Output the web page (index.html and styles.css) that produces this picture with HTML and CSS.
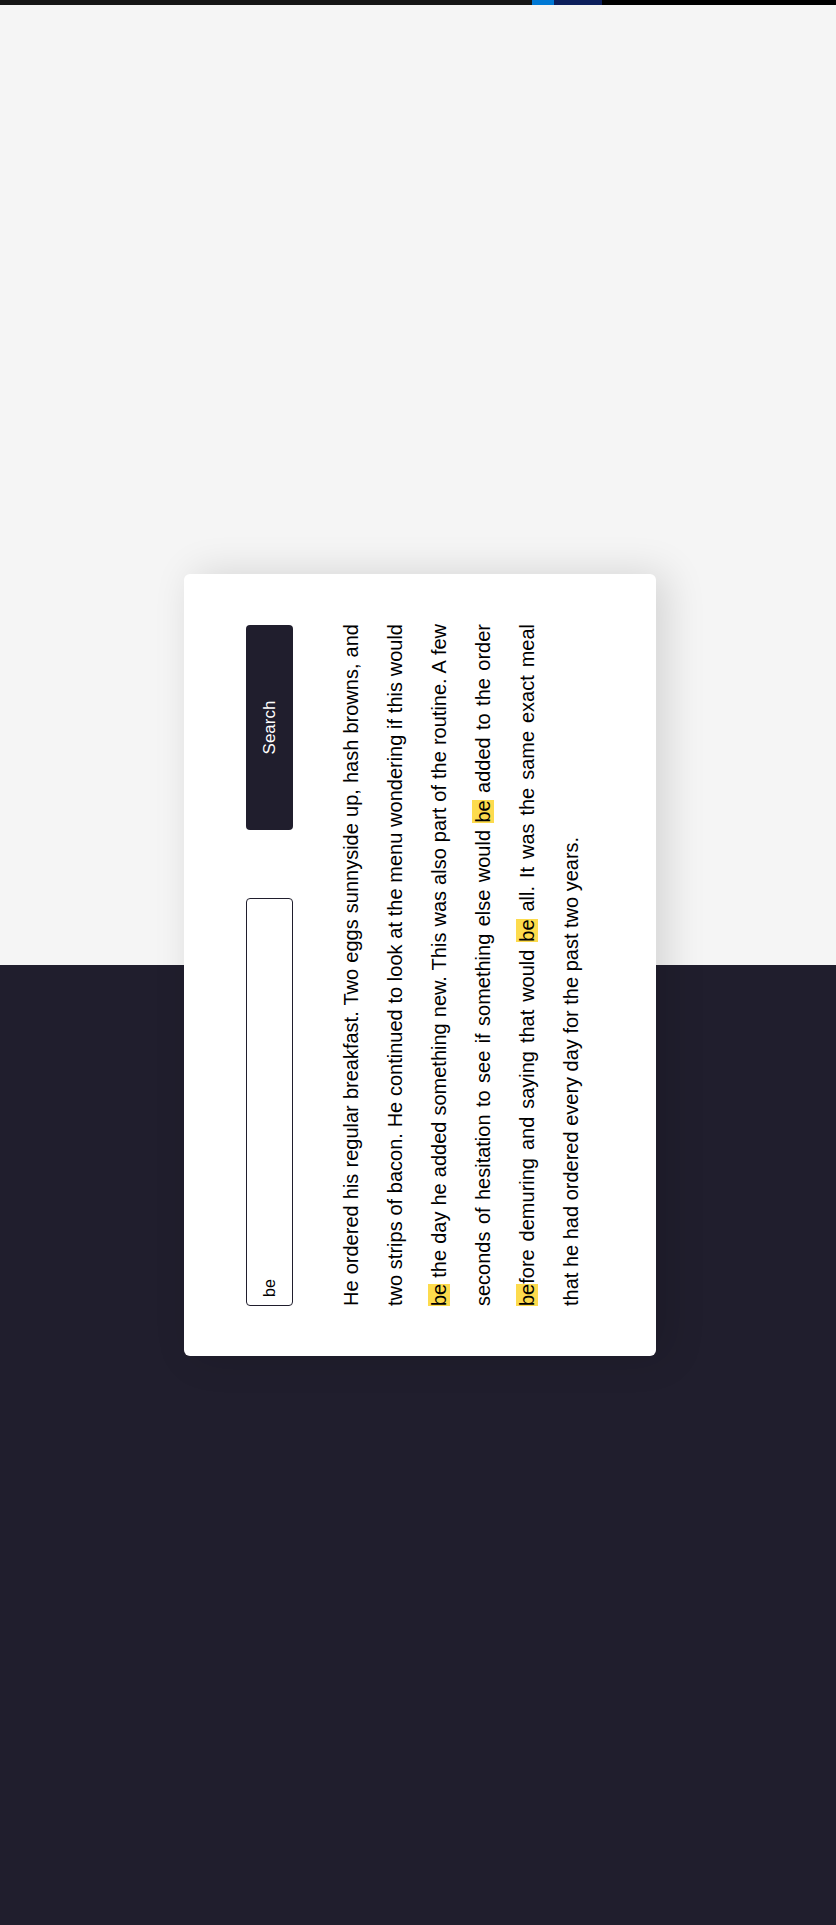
FILE: index.html
```html
<!DOCTYPE html>
<html lang="en">
<head>
<meta charset="utf-8">
<title>Search highlight</title>
<link rel="stylesheet" href="styles.css">
</head>
<body>
<div class="topbar">
  <div class="seg seg-dark"></div>
  <div class="seg seg-blue"></div>
  <div class="seg seg-navy"></div>
  <div class="seg seg-black"></div>
</div>
<main class="stage">
  <div class="card">
    <form class="search">
      <input class="search-input" type="text" value="be">
      <button class="search-btn" type="button">Search</button>
    </form>
    <p class="text">He ordered his regular breakfast. Two eggs sunnyside up, hash browns, and two strips of bacon. He continued to look at the menu wondering if this would <mark>be</mark> the day he added something new. This was also part of the routine. A few seconds of hesitation to see if something else would <mark>be</mark> added to the order <mark>be</mark>fore demuring and saying that would <mark>be</mark> all. It was the same exact meal that he had ordered every day for the past two years.</p>
  </div>
</main>
</body>
</html>
```

FILE: styles.css
```css
html, body {
  margin: 0;
  padding: 0;
}

body {
  font-family: "Liberation Sans", Arial, sans-serif;
  background: #201e2d;
}

.topbar {
  display: flex;
  height: 5px;
}

.seg-dark { width: 532px; background: #161616; }
.seg-blue { width: 22px; background: #0078d4; }
.seg-navy { width: 48px; background: #0d1f5c; }
.seg-black { flex: 1; background: #000; }

.stage {
  height: 1920px;
  display: flex;
  align-items: center;
  justify-content: center;
  padding-left: 4px;
  box-sizing: border-box;
  background: linear-gradient(to bottom, #f5f5f5 0, #f5f5f5 50%, #201e2d 50%, #201e2d 100%);
}

.card {
  width: 782px;
  box-sizing: border-box;
  padding: 62px 50px 63px;
  background: #fff;
  border-radius: 6px;
  box-shadow: 0 10px 40px rgba(0, 0, 0, 0.14);
  transform: rotate(-90deg);
}

.search {
  display: flex;
  gap: 68px;
  margin: 0;
}

.search-input {
  width: 408px;
  height: 47px;
  box-sizing: border-box;
  margin: 0;
  padding: 0 8px;
  border: 1px solid #201e2d;
  border-radius: 4px;
  font-family: "Liberation Sans", Arial, sans-serif;
  font-size: 16px;
  color: #000;
  background: #fff;
  outline: none;
}

.search-btn {
  width: 205px;
  height: 47px;
  margin: 0;
  padding: 0;
  border: 0;
  border-radius: 4px;
  background: #201e2d;
  color: #fff;
  font-family: "Liberation Sans", Arial, sans-serif;
  font-size: 17px;
}

.text {
  margin: 36px 0 0;
  font-size: 20px;
  line-height: 44px;
  text-align: justify;
  color: #000;
}

.text mark {
  background: #fddb4d;
  color: #000;
}
```
